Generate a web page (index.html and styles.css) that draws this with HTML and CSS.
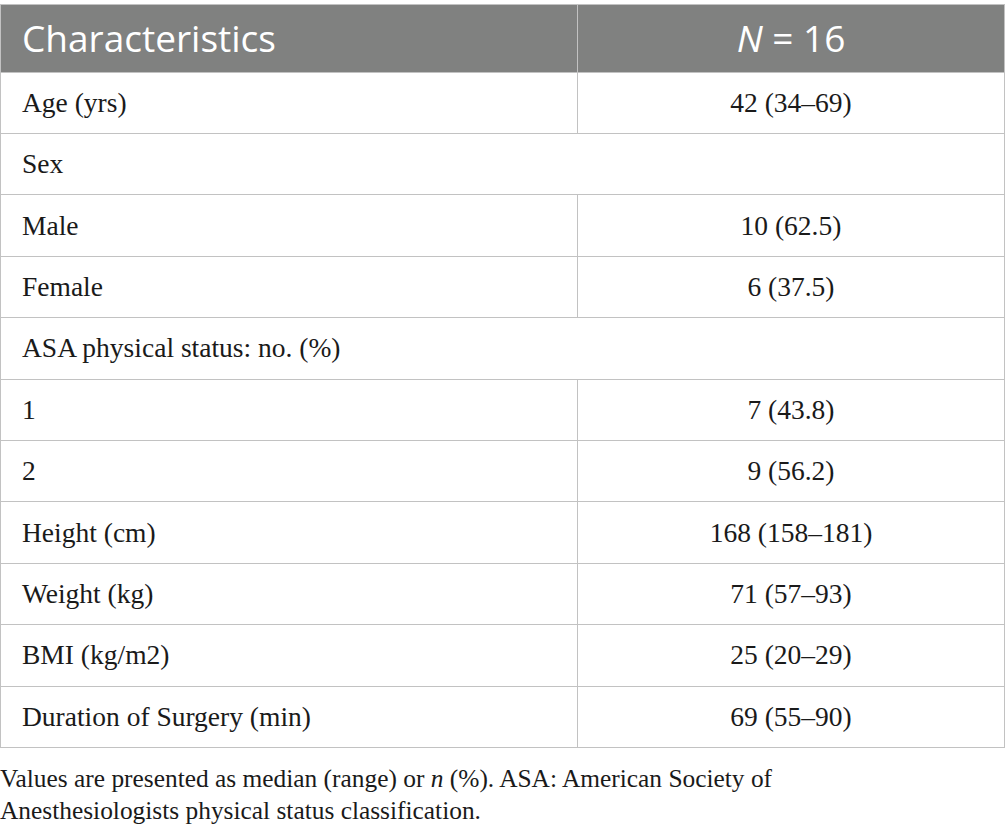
FILE: index.html
```html
<!DOCTYPE html>
<html>
<head>
<meta charset="utf-8">
<link rel="stylesheet" href="styles.css">
</head>
<body>
<div class="wrap">
<table class="data">
  <thead>
    <tr><th class="c1">Characteristics</th><th class="c2"><i>N</i> = 16</th></tr>
  </thead>
  <tbody>
    <tr><td>Age (yrs)</td><td class="v">42 (34–69)</td></tr>
    <tr><td colspan="2">Sex</td></tr>
    <tr><td>Male</td><td class="v">10 (62.5)</td></tr>
    <tr><td>Female</td><td class="v">6 (37.5)</td></tr>
    <tr><td colspan="2">ASA physical status: no. (%)</td></tr>
    <tr><td>1</td><td class="v">7 (43.8)</td></tr>
    <tr><td>2</td><td class="v">9 (56.2)</td></tr>
    <tr><td>Height (cm)</td><td class="v">168 (158–181)</td></tr>
    <tr><td>Weight (kg)</td><td class="v">71 (57–93)</td></tr>
    <tr><td>BMI (kg/m2)</td><td class="v">25 (20–29)</td></tr>
    <tr><td>Duration of Surgery (min)</td><td class="v">69 (55–90)</td></tr>
  </tbody>
</table>
<p class="note">Values are presented as median (range) or <i>n</i> (%). ASA: American Society of Anesthesiologists physical status classification.</p>
</div>
</body>
</html>
```
FILE: styles.css
```css
html, body { margin: 0; padding: 0; background: #fff; }
.wrap { padding-top: 4px; width: 1005px; }
.data {
  width: 1005px;
  border-collapse: collapse;
  table-layout: fixed;
}
.data th, .data td {
  border: 1px solid #c2c2c2;
}
.data th {
  background: #808180;
  color: #fff;
  font-family: "Open Sans", sans-serif;
  font-weight: 400;
  font-size: 37px;
  height: 67.7px;
  padding: 0 0 2px 21px;
  text-align: left;
  box-sizing: border-box;
}
.data th.c1 { width: 577px; }
.data th.c2 { text-align: center; padding: 0 0 2px 0; }
.data td {
  font-family: "Liberation Serif", serif;
  font-size: 27.5px;
  color: #1a1a1a;
  height: 60.4px;
  padding: 0 0 0 21px;
  vertical-align: middle;
}
.data td.v { text-align: center; padding: 0; }
.note {
  margin: 14px 0 0 0;
  font-family: "Liberation Serif", serif;
  font-size: 25.4px;
  line-height: 32px;
  color: #1a1a1a;
  width: 800px;
}
```
